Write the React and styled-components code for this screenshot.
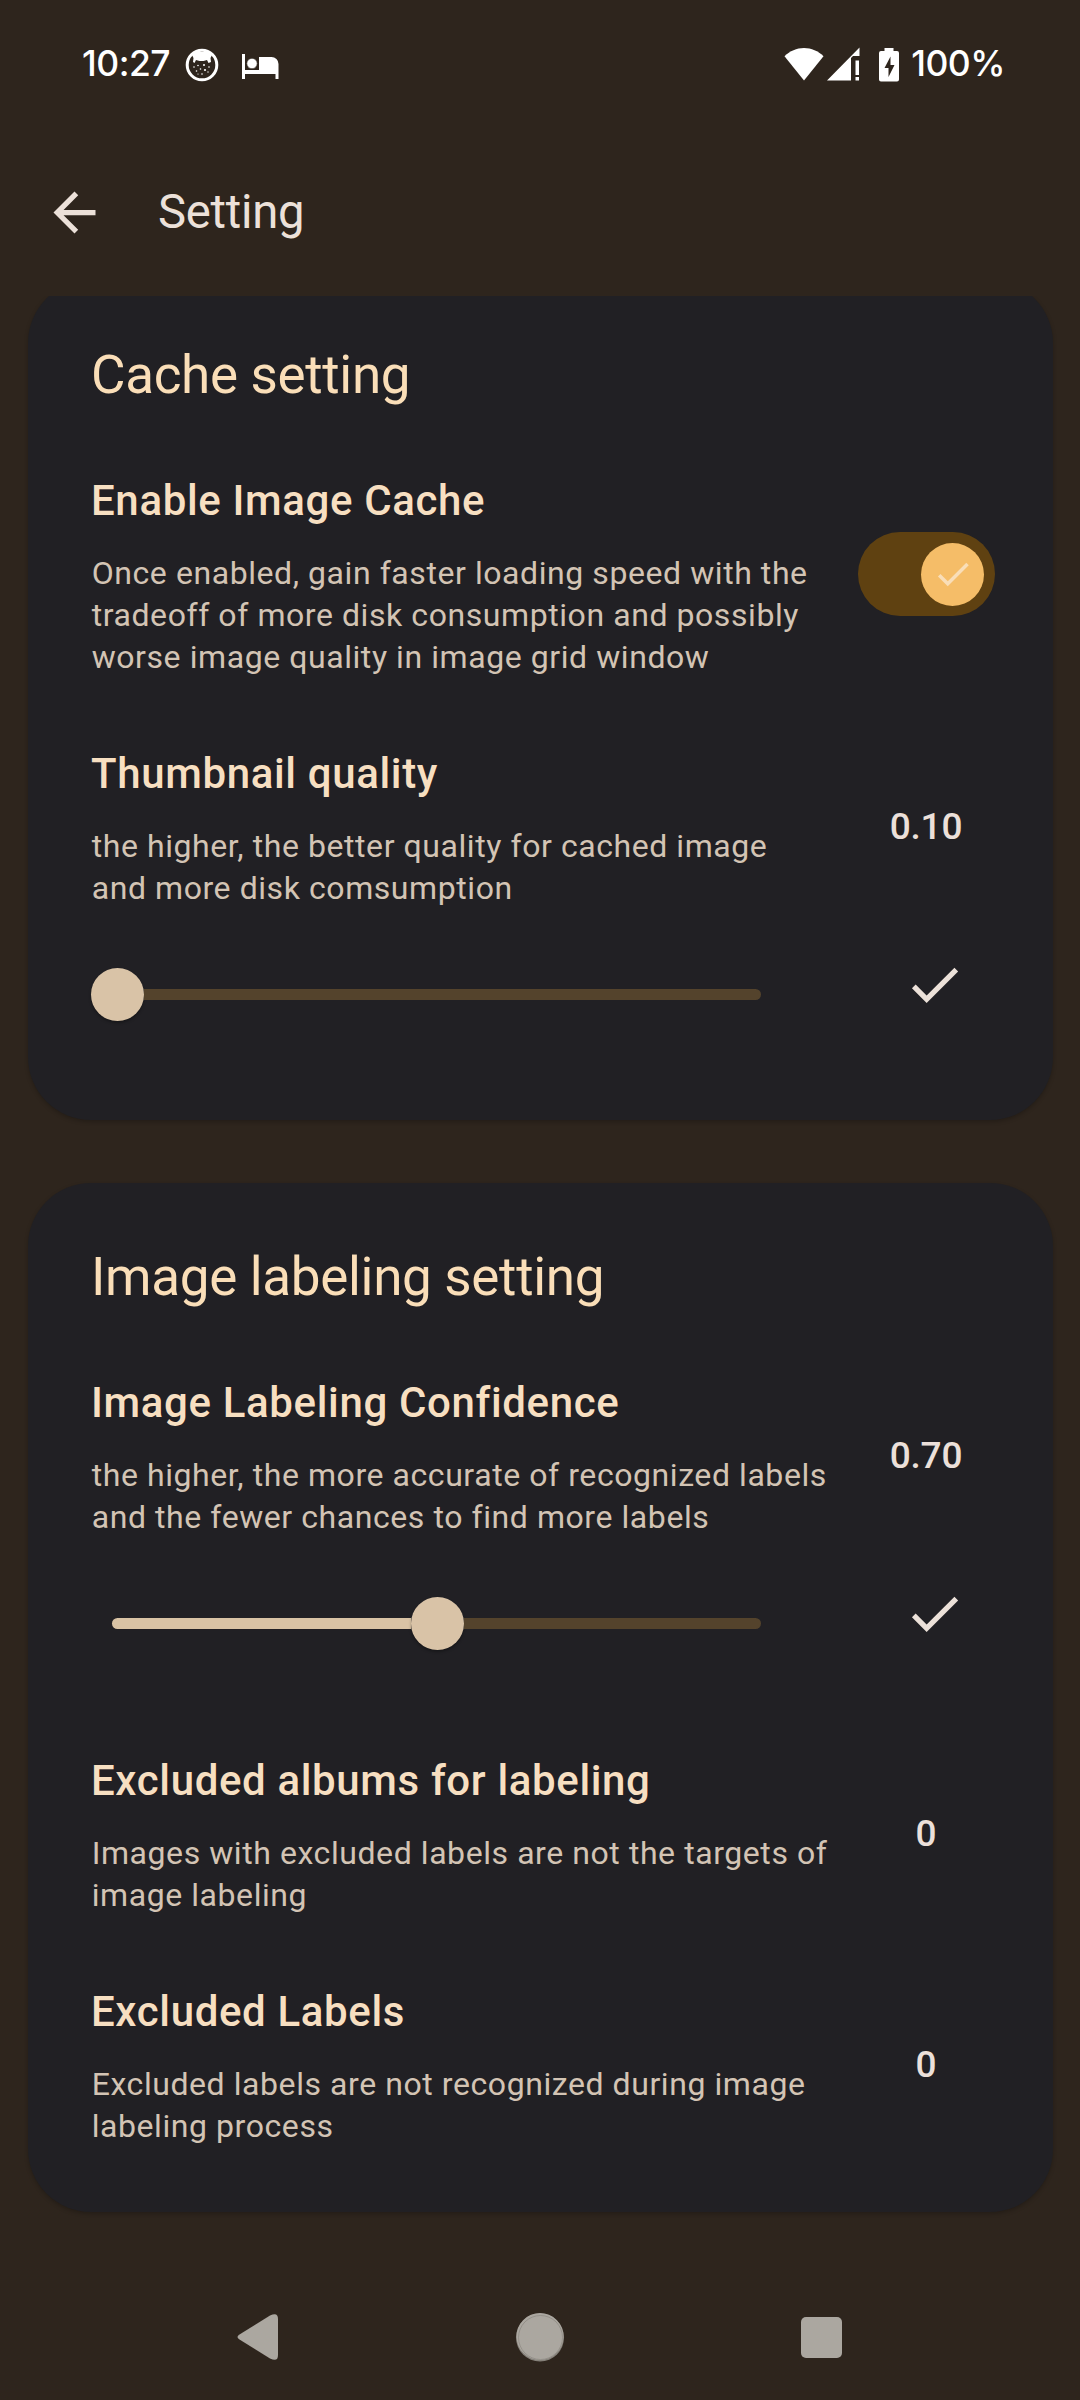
import React from 'react';
import styled, { createGlobalStyle } from 'styled-components';

const GlobalStyle = createGlobalStyle`
  * { box-sizing: border-box; }
  body {
    margin: 0;
    background: #2e251d;
    font-family: Roboto, "Noto Sans", sans-serif;
  }
  svg { display: block; flex: none; }
`;

const Screen = styled.div`
  display: flex;
  flex-direction: column;
  width: 1080px;
  height: 2400px;
  overflow: hidden;
  background: #2e251d;
`;

const StatusBar = styled.header`
  display: flex;
  align-items: center;
  justify-content: space-between;
  height: 128px;
  padding: 0 75px 0 82px;
  color: #fff;
`;

const StatusGroup = styled.div`
  display: flex;
  align-items: center;
`;

const StatusText = styled.span`
  margin-left: ${(p) => p.$gap || 0}px;
  font-family: Inter, Roboto, sans-serif;
  font-size: 35.5px;
  font-weight: 500;
  line-height: 44px;
  letter-spacing: -0.5px;
`;

const StatusIcon = styled.svg`
  margin-left: ${(p) => p.$gap || 0}px;
`;

const AppBar = styled.div`
  display: flex;
  align-items: center;
  height: 168px;
  padding: 0 43px;
  color: #ece1d9;
`;

const BackButton = styled.button`
  display: flex;
  margin: 0 52px 0 0;
  padding: 0;
  border: 0;
  background: none;
  color: inherit;
`;

const BarTitle = styled.h1`
  margin: 0;
  font-size: 47.25px;
  font-weight: 400;
  line-height: 60px;
  letter-spacing: -0.25px;
`;

const Scroller = styled.main`
  flex: 1;
  display: flex;
  flex-direction: column;
  gap: 63px;
  min-height: 0;
  overflow: hidden;
  padding: 0 27px 0 28px;
`;

const Card = styled.section`
  flex: none;
  padding: ${(p) => (p.$scrolled ? '77px 58px 32px 63px' : '76px 58px 33px 63px')};
  margin-top: ${(p) => (p.$scrolled ? -16 : 0)}px;
  border-radius: 63px;
  background: #212024;
  box-shadow: 0 2px 4px rgba(0, 0, 0, 0.22);
`;

const CardTitle = styled.h2`
  margin: 0 0 18px;
  height: 62px;
  color: #fadeb8;
  font-size: 53px;
  font-weight: 400;
  line-height: 37px;
  letter-spacing: -0.33px;
`;

const Item = styled.div`
  display: flex;
  align-items: center;
  padding: 38px 0 32px;
`;

const ItemText = styled.div`
  width: 767px;
`;

const ItemTitle = styled.h3`
  margin: 0 0 25px;
  color: #f7dfc1;
  font-size: 42px;
  font-weight: 500;
  line-height: 52px;
  letter-spacing: 0.64px;
`;

const ItemNote = styled.p`
  margin: 0;
  padding-left: 0.7px;
  color: #d3c4b4;
  font-size: 32px;
  line-height: 42px;
  letter-spacing: 0.57px;
  white-space: pre-line;
`;

const ItemEnd = styled.div`
  display: flex;
  justify-content: center;
  width: 137px;
  margin-bottom: 5px;
`;

const Value = styled.span`
  padding: 1px 1px 0 0;
  color: #ece0da;
  font-size: 37px;
  font-weight: 500;
  line-height: 52px;
  letter-spacing: -0.2px;
`;

const Switch = styled.button`
  display: flex;
  align-items: center;
  justify-content: flex-end;
  width: 137px;
  height: 84px;
  padding: 0 11px;
  border: 0;
  border-radius: 42px;
  background: #5f4111;
`;

const SwitchThumb = styled.span`
  display: flex;
  align-items: center;
  justify-content: center;
  width: 63px;
  height: 63px;
  border-radius: 50%;
  background: #f5bd68;
  color: #f9deb8;
`;

const SliderRow = styled.div`
  display: flex;
  align-items: flex-start;
  justify-content: space-between;
  height: 147px;
  padding: 12px 29px 0 0;
  color: #ece1d9;
`;

const Slider = styled.div`
  display: flex;
  align-items: center;
  width: 670px;
  height: 53px;
  margin-top: 15px;
`;

const Track = styled.span`
  height: 11px;
  background: ${(p) => (p.$active ? '#d9c3a5' : '#54432c')};
  border-radius: ${(p) => (p.$active ? '6px 0 0 6px' : '0 6px 6px 0')};
  flex: ${(p) => (p.$active ? 'none' : '1')};
  margin-left: ${(p) => (p.$active ? 21 : 0)}px;
`;

const SliderThumb = styled.span`
  flex: none;
  width: 53px;
  height: 53px;
  border-radius: 50%;
  background: #d9c3a7;
  box-shadow: 0 2px 3px rgba(0, 0, 0, 0.3);
`;

const NavBar = styled.nav`
  flex: none;
  display: flex;
  align-items: center;
  justify-content: space-between;
  height: 126px;
  padding: 0 234px;
  color: #aba7a0;
`;

const CHECK = 'M9 16.17 4.83 12l-1.42 1.41L9 19 21 7l-1.41-1.41z';

function CheckIcon({ size }) {
  return (
    <svg width={size} height={size} viewBox="0 0 24 24" fill="currentColor">
      <path d={CHECK} />
    </svg>
  );
}

function SettingItem({ title, note, children }) {
  return (
    <Item>
      <ItemText>
        <ItemTitle>{title}</ItemTitle>
        <ItemNote>{note}</ItemNote>
      </ItemText>
      <ItemEnd>{children}</ItemEnd>
    </Item>
  );
}

function SettingSlider({ filled }) {
  return (
    <SliderRow>
      <Slider>
        {filled > 0 && <Track $active style={{ width: filled }} />}
        <SliderThumb />
        <Track />
      </Slider>
      <CheckIcon size={63} />
    </SliderRow>
  );
}

export default function App() {
  return (
    <Screen>
      <GlobalStyle />
      <StatusBar>
        <StatusGroup>
          <StatusText>10:27</StatusText>
          <StatusIcon $gap={15} width="34" height="36" viewBox="0 -2 34 36" fill="none">
            <circle cx="17" cy="17" r="14.8" stroke="#fff" strokeWidth="3" />
            <path
              d="M7 7l3-3h14l3 3-1.500 3 .5 4-2.500 1-1.500-3-3.500 1h-4l-3.500-1-1.500 3L8 14l.5-4z"
              fill="#fff"
            />
            <g fill="#fff">
              <circle cx="9" cy="19" r=".8" /><circle cx="13" cy="17.500" r=".8" />
              <circle cx="19" cy="17" r="1" /><circle cx="24" cy="19" r=".8" />
              <circle cx="11.500" cy="23" r=".8" /><circle cx="15.500" cy="21" r=".8" />
              <circle cx="20" cy="22" r="1.100" /><circle cx="23" cy="24" r=".7" />
              <circle cx="17" cy="26" r=".8" /><circle cx="13" cy="26" r=".6" />
            </g>
          </StatusIcon>
          <StatusIcon $gap={22} width="38" height="31" viewBox="0 -4 38 31" fill="#fff">
            <path d="M1 1h3v16h14V4h12.500a7 7 0 0 1 7 7v15h-3v-5H4v5H1z" />
            <circle cx="11" cy="10.500" r="5.200" stroke="#2e251d" strokeWidth=".6" />
          </StatusIcon>
        </StatusGroup>
        <StatusGroup>
          <StatusIcon width="40" height="34" viewBox="0 0 40 34" fill="#fff">
            <path d="M20 33.500.5 9.200C6 4 12.500 1 20 1s14 3 19.500 8.200z" />
          </StatusIcon>
          <StatusIcon $gap={2} width="34" height="34" viewBox="0 0 34 34" fill="#fff">
            <path d="M1 33.500 33.500.5V9H27l-2 2v22.500zM29.500 13.500h3.500V28h-3.500zM29.500 30h3.500v3.500h-3.500z" />
          </StatusIcon>
          <StatusIcon $gap={18} width="22" height="35" viewBox="0 0 22 35">
            <path
              d="M6.500 1h9v3H19a2 2 0 0 1 2 2v26.500a2 2 0 0 1-2 2H3a2 2 0 0 1-2-2V6a2 2 0 0 1 2-2h3.500z"
              fill="#fff"
            />
            <path d="M12.500 9.500 6.500 21h4v9l6-12h-4z" fill="#2e251d" />
          </StatusIcon>
          <StatusText $gap={11}>100%</StatusText>
        </StatusGroup>
      </StatusBar>

      <AppBar>
        <BackButton>
          <svg width="63" height="63" viewBox="0 0 24 24" fill="currentColor">
            <path d="M20 11H7.830l5.590-5.590L12 4l-8 8 8 8 1.410-1.410L7.830 13H20z" />
          </svg>
        </BackButton>
        <BarTitle>Setting</BarTitle>
      </AppBar>

      <Scroller>
        <Card $scrolled>
          <CardTitle>Cache setting</CardTitle>
          <SettingItem
            title="Enable Image Cache"
            note={'Once enabled, gain faster loading speed with the\ntradeoff of more disk consumption and possibly\nworse image quality in image grid window'}
          >
            <Switch>
              <SwitchThumb>
                <CheckIcon size={42} />
              </SwitchThumb>
            </Switch>
          </SettingItem>
          <SettingItem
            title="Thumbnail quality"
            note={'the higher, the better quality for cached image\nand more disk comsumption'}
          >
            <Value>0.10</Value>
          </SettingItem>
          <SettingSlider filled={0} />
        </Card>

        <Card>
          <CardTitle>Image labeling setting</CardTitle>
          <SettingItem
            title="Image Labeling Confidence"
            note={'the higher, the more accurate of recognized labels\nand the fewer chances to find more labels'}
          >
            <Value>0.70</Value>
          </SettingItem>
          <SettingSlider filled={299} />
          <SettingItem
            title="Excluded albums for labeling"
            note={'Images with excluded labels are not the targets of\nimage labeling'}
          >
            <Value>0</Value>
          </SettingItem>
          <SettingItem
            title="Excluded Labels"
            note={'Excluded labels are not recognized during image\nlabeling process'}
          >
            <Value>0</Value>
          </SettingItem>
        </Card>
      </Scroller>

      <NavBar>
        <svg width="48" height="54" viewBox="0 0 48 54" fill="currentColor">
          <path d="M5.500 24.500 36 5.600q8-4 8 3.400v36q0 7.500-8 3.400L5.500 29.500q-4-2.500 0-5z" />
        </svg>
        <svg width="54" height="54" viewBox="0 0 54 54">
          <circle cx="27" cy="27.500" r="24" fill="#85817a" />
          <circle cx="27" cy="26.500" r="23.500" fill="currentColor" />
          <circle cx="27.500" cy="27.500" r="22" fill="none" stroke="#8f8b84" strokeWidth=".8" />
        </svg>
        <svg width="48" height="54" viewBox="0 0 48 54">
          <rect x="3" y="7" width="41" height="41" rx="5" fill="currentColor" />
        </svg>
      </NavBar>
    </Screen>
  );
}
